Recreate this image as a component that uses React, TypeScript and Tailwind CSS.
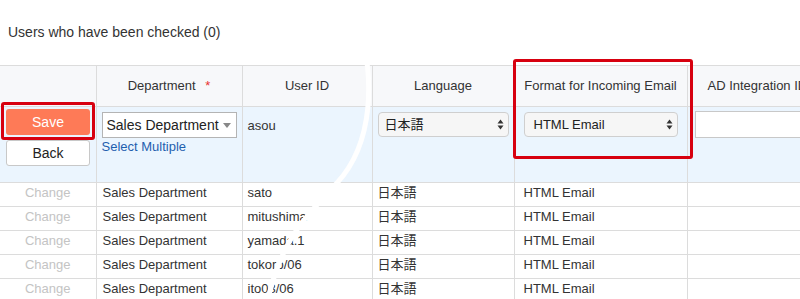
import React from 'react'

const rows = [
  { dept: 'Sales Department', id: 'sato', lang: '日本語', fmt: 'HTML Email' },
  { dept: 'Sales Department', id: 'mitushima', lang: '日本語', fmt: 'HTML Email' },
  { dept: 'Sales Department', id: 'yamada.1', lang: '日本語', fmt: 'HTML Email' },
  { dept: 'Sales Department', id: 'tokoro/06', lang: '日本語', fmt: 'HTML Email' },
  { dept: 'Sales Department', id: 'ito03/06', lang: '日本語', fmt: 'HTML Email' },
]

function UpDown() {
  return (
    <svg width="7" height="11" viewBox="0 0 7 11" className="shrink-0">
      <path d="M3.5 0.5 L6.5 4.5 L0.5 4.5 Z" fill="#333" />
      <path d="M3.5 10.5 L6.5 6.5 L0.5 6.5 Z" fill="#333" />
    </svg>
  )
}

export default function App() {
  return (
    <div
      className="relative h-[299px] w-[800px] overflow-hidden bg-white text-[#333]"
      style={{ fontFamily: "'Liberation Sans', 'Noto Sans CJK JP', sans-serif" }}
    >
      <div className="h-[65px] pl-2 pt-[22px] text-[14px]">Users who have been checked (0)</div>

      <table className="table-fixed border-collapse text-[13px]" style={{ width: 960 }}>
        <colgroup>
          <col className="w-[96px]" />
          <col className="w-[146px]" />
          <col className="w-[130px]" />
          <col className="w-[142px]" />
          <col className="w-[173px]" />
          <col className="w-[273px]" />
        </colgroup>
        <thead>
          <tr className="h-[41px] bg-[#f7f8fa]">
            <th className="border border-l-0 border-[#dcdcdc] font-normal"></th>
            <th className="border border-[#dcdcdc] font-normal">
              Department <span className="ml-1.5 text-[#e8322f]">*</span>
            </th>
            <th className="border border-[#dcdcdc] font-normal">User ID</th>
            <th className="border border-[#dcdcdc] font-normal">Language</th>
            <th className="border border-[#dcdcdc] font-normal">Format for Incoming Email</th>
            <th className="whitespace-nowrap border border-[#dcdcdc] pl-[20px] text-left font-normal">
              AD Integration ID
            </th>
          </tr>
        </thead>
        <tbody>
          <tr className="h-[76px] bg-[#ebf5fe] align-top">
            <td className="border border-l-0 border-[#dcdcdc] px-[6px] pt-[2px]">
              <div className="flex flex-col gap-[5px]">
                <button className="h-[26px] w-[84px] rounded-[3px] bg-[#fe7a57] text-[14px] text-white">Save</button>
                <button className="h-[26px] w-[84px] rounded-[3px] border border-[#c8c8c8] bg-white text-[14px] text-[#222]">
                  Back
                </button>
              </div>
            </td>
            <td className="border border-[#dcdcdc] px-[5px] pt-[5px]">
              <div className="flex h-[26px] w-[135px] items-center justify-between border border-[#b4b4b4] bg-white pl-[4px] pr-[5px] text-[14px] text-[#222]">
                <span>Sales Department</span>
                <svg width="8" height="5" viewBox="0 0 8 5">
                  <path d="M0 0 L8 0 L4 5 Z" fill="#888" />
                </svg>
              </div>
              <div className="text-[13px] leading-[17px] text-[#1f5fae]">Select Multiple</div>
            </td>
            <td className="border border-[#dcdcdc] px-[5px] pt-[9px] text-[13px]">asou</td>
            <td className="border border-[#dcdcdc] px-[5px] pt-[5px]">
              <div className="flex h-[25px] w-[131px] items-center justify-between rounded-[4px] border border-[#cfcfcf] bg-[#f6f6f6] pl-[6px] pr-[4px] text-[13px] text-[#222]">
                <span>日本語</span>
                <UpDown />
              </div>
            </td>
            <td className="border border-[#dcdcdc] px-[9px] pt-[5px]">
              <div className="flex h-[25px] w-[154px] items-center justify-between rounded-[4px] border border-[#cfcfcf] bg-[#f6f6f6] pl-[9px] pr-[4px] text-[13px] text-[#222]">
                <span>HTML Email</span>
                <UpDown />
              </div>
            </td>
            <td className="border border-[#dcdcdc] pl-[7px] pt-[4px]">
              <div className="h-[27px] w-[200px] border border-[#c8c8c8] bg-white"></div>
            </td>
          </tr>
          {rows.map((r, i) => (
            <tr key={i} className="h-[24px] bg-white align-top leading-[19px]">
              <td className="border border-l-0 border-[#dcdcdc] text-center text-[#c4c4c4]">Change</td>
              <td className="border border-[#dcdcdc] px-[6px]">{r.dept}</td>
              <td className="border border-[#dcdcdc] px-[5px]">{r.id}</td>
              <td className="border border-[#dcdcdc] px-[5px]">{r.lang}</td>
              <td className="border border-[#dcdcdc] px-[9px]">{r.fmt}</td>
              <td className="border border-[#dcdcdc]"></td>
            </tr>
          ))}
        </tbody>
      </table>

      {/* annotation boxes */}
      <div className="pointer-events-none absolute left-[1px] top-[102px] h-[38px] w-[94px] rounded-[3px] border-[3px] border-[#d7000f]"></div>
      <div className="pointer-events-none absolute left-[513px] top-[59px] h-[100px] w-[180px] rounded-[3px] border-[3px] border-[#d7000f]"></div>

      {/* torn-edge arc */}
      <svg className="pointer-events-none absolute left-0 top-0" width="800" height="299">
        <path
          d="M355 10 C378 80 372 145 337 183 S282 240 268 299"
          fill="none"
          stroke="#fff"
          strokeWidth="5"
          strokeLinecap="round"
        />
      </svg>
    </div>
  )
}
